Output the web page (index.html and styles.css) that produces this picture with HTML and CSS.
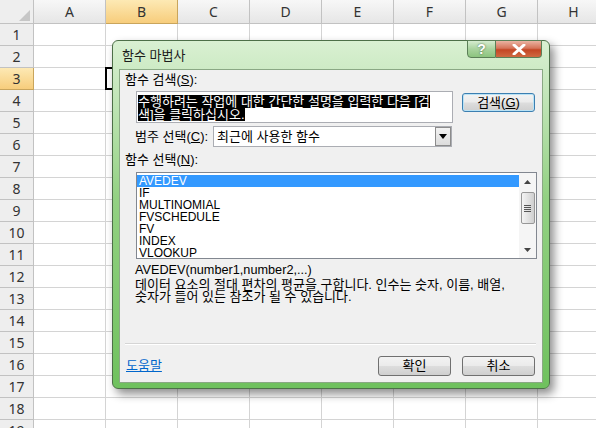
FILE: index.html
```html
<!DOCTYPE html>
<html lang="ko">
<head>
  <meta charset="UTF-8">
  <title>함수 마법사</title>
  <link rel="stylesheet" href="styles.css">
</head>
<body>
  <div class="sheet" id="sheet"></div>

  <div class="dialog">
    <div class="titlebar">
      <span class="title">함수 마법사</span>
      <div class="caption-btns">
        <span class="cap-help">?</span>
        <span class="cap-close">
          <svg width="14" height="11" viewBox="0 0 14 11"><path d="M2 1 L12 10 M12 1 L2 10" stroke="#fff" stroke-width="3" stroke-linecap="round"/></svg>
        </span>
      </div>
    </div>

    <div class="client">
      <div class="lbl top-lbl">함수 검색(<u>S</u>):</div>
      <div class="search-row">
        <div class="textbox">
          <span class="sel">수행하려는 작업에 대한 간단한 설명을 입력한 다음 [검</span><br>
          <span class="sel">색]을 클릭하십시오.</span>
        </div>
        <div class="btn btn-default">검색(<u>G</u>)</div>
      </div>
      <div class="cat-row">
        <div class="lbl cat-lbl">범주 선택(<u>C</u>):</div>
        <div class="combo">
          <span class="combo-val">최근에 사용한 함수</span>
          <span class="combo-arrow"><svg width="8" height="5" viewBox="0 0 8 5"><path d="M0 0 H8 L4 5 Z" fill="#000"/></svg></span>
        </div>
      </div>
      <div class="lbl fn-lbl">함수 선택(<u>N</u>):</div>
      <div class="listbox">
        <div class="items">
          <div class="item selected">AVEDEV</div>
          <div class="item">IF</div>
          <div class="item">MULTINOMIAL</div>
          <div class="item">FVSCHEDULE</div>
          <div class="item">FV</div>
          <div class="item">INDEX</div>
          <div class="item">VLOOKUP</div>
        </div>
        <div class="vscroll">
          <span class="arrow"><svg width="7" height="4" viewBox="0 0 7 4"><path d="M0 4 L3.5 0 L7 4 Z" fill="#444"/></svg></span>
          <span class="thumb"><span class="grip"></span></span>
          <span class="track"></span>
          <span class="arrow"><svg width="7" height="4" viewBox="0 0 7 4"><path d="M0 0 H7 L3.5 4 Z" fill="#444"/></svg></span>
        </div>
      </div>
      <div class="lbl syntax">AVEDEV(number1,number2,...)</div>
      <div class="lbl desc">데이터 요소의 절대 편차의 평균을 구합니다. 인수는 숫자, 이름, 배열,<br>숫자가 들어 있는 참조가 될 수 있습니다.</div>
      <div class="sep"></div>
      <div class="bottom-row">
        <a class="help" href="#">도움말</a>
        <div class="btn">확인</div>
        <div class="btn">취소</div>
      </div>
    </div>
  </div>

  <script>
    // 시트 격자 만들기
    const sheet = document.getElementById('sheet');
    const cols = ["", "A", "B", "C", "D", "E", "F", "G", "H"];
    for (let r = 0; r < 20; r++) {
      cols.forEach((c, i) => {
        const cell = document.createElement('div');
        if (r === 0 && i === 0) cell.className = 'corner';
        else if (r === 0) cell.className = 'colhead' + (c === 'B' ? ' hl' : '');
        else if (i === 0) cell.className = 'rowhead' + (r === 3 ? ' hl' : '');
        else cell.className = 'cell' + (c === 'B' && r === 3 ? ' active' : '');
        if (r === 0 && i > 0) cell.textContent = c;
        if (i === 0 && r > 0) cell.textContent = r;
        sheet.appendChild(cell);
      });
    }
  </script>
</body>
</html>
```

FILE: styles.css
```css
body { margin: 0; width: 596px; height: 428px; overflow: hidden; background: #fff; font-family: "Liberation Sans", "Noto Sans CJK KR", sans-serif; position: relative; }

/* sheet */
.sheet { display: grid; grid-template-columns: 34px repeat(8, 72px); grid-template-rows: 24px; grid-auto-rows: 22px; }
.cell { border-right: 1px solid #d4d4d4; border-bottom: 1px solid #d4d4d4; box-sizing: border-box; }
.cell.active { border: 2px solid #000; margin: -1px 0 0 -1px; }
.colhead, .rowhead { background: linear-gradient(#f7f7f7, #e6e6e6); border-right: 1px solid #c2c2c2; border-bottom: 1px solid #c2c2c2; box-sizing: border-box; font-family: "Noto Sans", sans-serif; font-size: 14px; line-height: 16px; color: #333; display: flex; align-items: center; justify-content: center; }
.rowhead { background: #eeeeee; }
.colhead.hl, .rowhead.hl { background: linear-gradient(#fde9b4, #f7cd7c); border-color: #c9a55c; }
.corner { background: #eeeeee; border-right: 1px solid #c2c2c2; border-bottom: 1px solid #c2c2c2; box-sizing: border-box; position: relative; }
.corner::after { content: ""; position: absolute; right: 3px; bottom: 2px; border-left: 11px solid transparent; border-bottom: 11px solid #c6c6c6; }

/* dialog */
.dialog { position: absolute; left: 112px; top: 40px; width: 438px; height: 349px; box-sizing: border-box; border: 1px solid #4d6f48; border-radius: 6px; background: linear-gradient(#d9f0d2, #bfe4b5 18%, #93d183 45%, #6fc15e); padding: 0 6px 5px 6px; display: flex; flex-direction: column; box-shadow: 4px 5px 10px rgba(0,0,0,0.45); }
.titlebar { height: 28px; display: flex; justify-content: space-between; align-items: flex-start; }
.title { font-family: "Noto Sans CJK KR", sans-serif; font-size: 13px; line-height: 13px; color: #1b1b1b; margin: 7px 0 0 3px; }
.caption-btns { display: flex; margin-top: -1px; margin-right: 1px; }
.cap-help, .cap-close { height: 18px; box-sizing: border-box; border: 1px solid #5b7f57; display: flex; align-items: center; justify-content: center; }
.cap-help { width: 29px; border-radius: 0 0 0 4px; background: linear-gradient(#d6ecd0, #a9d39e 50%, #8cc47f); color: #fff; font-weight: bold; font-size: 14px; text-shadow: 0 0 2px #3c5a38; }
.cap-close { width: 46px; border-left: 0; border-radius: 0 0 4px 0; background: linear-gradient(#eab3a2, #d5745a 45%, #c44625 55%, #cf6a42); }

.client { flex: 1; background: #f0f0f0; border: 1px solid #8aa884; font-size: 13px; color: #000; display: flex; flex-direction: column; }
.lbl { line-height: 12px; white-space: nowrap; }
.top-lbl { margin: 4px 0 0 5px; }
.search-row { display: flex; align-items: flex-start; margin-top: 5px; }
.textbox { margin-left: 16px; width: 317px; height: 32px; box-sizing: border-box; border: 1px solid #abadb3; background: #fff; padding: 3px 1px 0; line-height: 13px; }
.sel { display: inline-block; background: #000; color: #fff; white-space: nowrap; }
.btn { width: 73px; height: 20px; box-sizing: border-box; border: 1px solid #707070; border-radius: 3px; background: linear-gradient(#f3f3f3, #ebebeb 48%, #dddddd 52%, #cfcfcf); display: flex; align-items: center; justify-content: center; line-height: 12px; }
.btn-default { margin: 2px 0 0 9px; height: 19px; border-color: #3c7fb1; box-shadow: inset 0 0 0 1px #b9e2f5; }
.cat-row { display: flex; align-items: center; margin-top: 3px; }
.cat-lbl { width: 78px; padding-left: 15px; }
.combo { width: 239px; height: 21px; box-sizing: border-box; border: 1px solid #abadb3; background: #fff; display: flex; align-items: center; justify-content: space-between; }
.combo-val { padding-left: 3px; line-height: 12px; }
.combo-arrow { width: 16px; height: 19px; box-sizing: border-box; border: 1px solid #8c8c8c; background: linear-gradient(#f2f2f2, #dcdcdc); display: flex; align-items: center; justify-content: center; }
.fn-lbl { margin: 7px 0 0 5px; }
.listbox { margin: 6px 0 0 16px; width: 401px; height: 87px; box-sizing: border-box; border: 1px solid #828790; background: #fff; display: flex; font-size: 12px; }
.items { flex: 1; padding-top: 2px; }
.item { line-height: 12px; padding-left: 2px; }
.item.selected { background: #3399ff; color: #fff; }
.vscroll { width: 17px; background: #f5f5f5; display: flex; flex-direction: column; align-items: center; }
.arrow { height: 17px; display: flex; align-items: center; justify-content: center; }
.thumb { width: 14px; height: 32px; box-sizing: border-box; border: 1px solid #979797; border-radius: 2px; background: linear-gradient(90deg, #f4f4f4, #e2e2e2 50%, #cfcfcf); display: flex; align-items: center; justify-content: center; margin-top: 2px; }
.grip { width: 7px; height: 7px; background: repeating-linear-gradient(#555 0 1px, transparent 1px 2px); }
.track { flex: 1; }
.syntax { margin: 5px 0 0 15px; font-size: 12.7px; }
.desc { margin: 3px 0 0 15px; }
.sep { margin: 40px 6px 0 5px; height: 1px; background: #d5d5d5; border-bottom: 1px solid #fff; }
.bottom-row { display: flex; align-items: center; gap: 11px; margin: 11px 7px 0 6px; }
.help { flex: 1; color: #0066cc; line-height: 12px; }
```
